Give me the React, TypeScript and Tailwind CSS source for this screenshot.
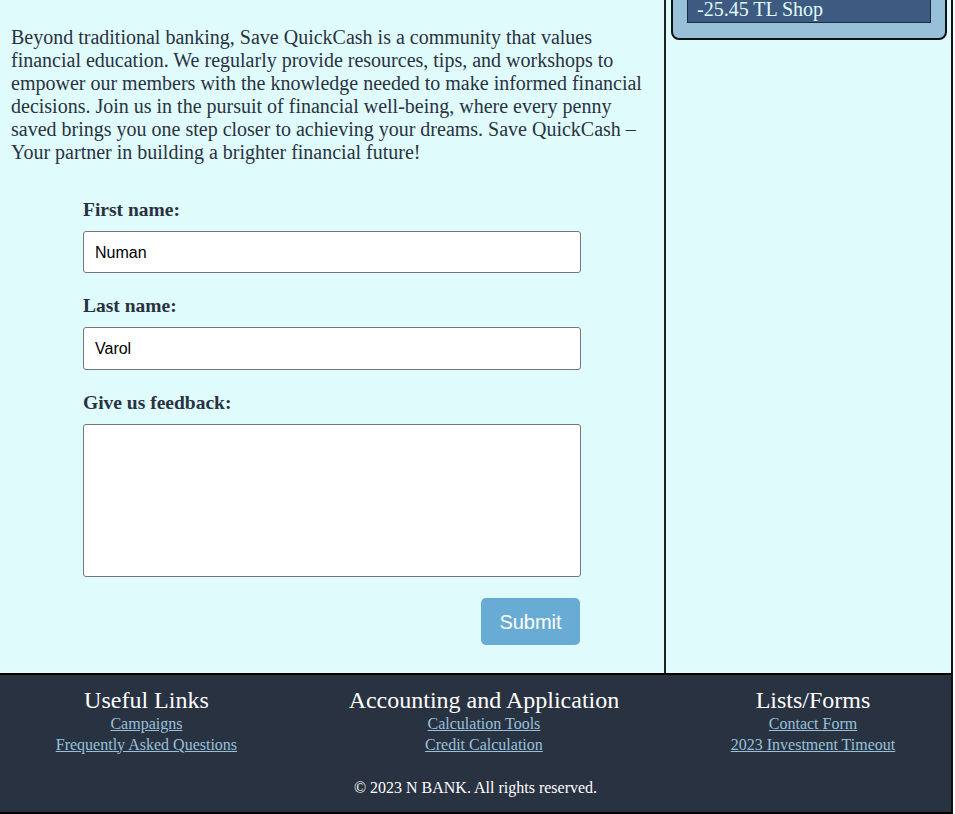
import React from 'react';

const serif = "font-['Liberation_Serif','Times_New_Roman',serif]";
const sans = "font-['Liberation_Sans',Arial,sans-serif]";

const footerCols = [
  { title: 'Useful Links', links: ['Campaigns', 'Frequently Asked Questions'] },
  { title: 'Accounting and Application', links: ['Calculation Tools', 'Credit Calculation'] },
  { title: 'Lists/Forms', links: ['Contact Form', '2023 Investment Timeout'] },
];

const FormField = ({ label, children }: { label: string; children: React.ReactNode }) => (
  <div className="flex flex-col">
    <label className="text-[19.5px] leading-[23px] font-bold text-[#293241] mb-[10px]">{label}</label>
    {children}
  </div>
);

const App: React.FC = () => {
  return (
    <div className={`${serif} w-[953px] h-[814px] overflow-hidden bg-[#e0fbfc] flex flex-col border-r-2 border-[#111]`}>
      <div className="flex h-[673px] shrink-0">
        <main className="w-[664px] pl-[11px] pr-[10px] pt-[26px]">
          <p className="text-[20px] leading-[23px] text-[#293241]">
            Beyond traditional banking, Save QuickCash is a community that values financial education. We
            regularly provide resources, tips, and workshops to empower our members with the knowledge needed to
            make informed financial decisions. Join us in the pursuit of financial well-being, where every penny
            saved brings you one step closer to achieving your dreams. Save QuickCash – Your partner in building a
            brighter financial future!
          </p>

          <form className="ml-[72px] w-[498px] mt-[34px] flex flex-col gap-[21px]" autoComplete="off">
            <FormField label="First name:">
              <input
                defaultValue="Numan"
                className={`${sans} h-[42px] bg-white border border-[#767676] rounded-[3px] px-[11px] pt-[2px] text-[16px] text-black outline-none`}
              />
            </FormField>
            <FormField label="Last name:">
              <input
                defaultValue="Varol"
                className={`${sans} h-[43px] bg-white border border-[#767676] rounded-[3px] px-[11px] text-[16px] text-black outline-none`}
              />
            </FormField>
            <FormField label="Give us feedback:">
              <textarea className="h-[153px] bg-white border border-[#767676] rounded-[3px] resize-none outline-none" />
            </FormField>
            <div className="flex justify-end">
              <button
                type="button"
                className={`${sans} w-[99px] h-[47px] mr-[1px] bg-[#68acd5] text-white text-[20px] rounded-[5px]`}
              >
                Submit
              </button>
            </div>
          </form>
        </main>

        <aside className="flex-1 border-l-2 border-[#222] pl-[5px] pr-[4px]">
          <div className="-mt-[20px] bg-[#98c1d9] border-2 border-[#111] rounded-b-[8px] px-[14px] pt-[14px] pb-[15px]">
            <div className="bg-[#3d5a80] border border-[#1f2b3d] px-[9px] pb-[1px] text-[20px] leading-[24px] text-[#e0fbfc]">
              -25.45 TL Shop
            </div>
          </div>
        </aside>
      </div>

      <footer className="flex-1 bg-[#293241] border-t-2 border-b-2 border-black text-white pt-[12px]">
        <div className="flex justify-around">
          {footerCols.map(col => (
            <div key={col.title} className="flex flex-col items-center">
              <h3 className="text-[24px] leading-[27px]">{col.title}</h3>
              {col.links.map(l => (
                <a key={l} href="#" className="text-[16px] leading-[20.5px] text-[#98c1d9] underline">
                  {l}
                </a>
              ))}
            </div>
          ))}
        </div>
        <p className="text-center text-[16px] leading-[20px] mt-[23px]">© 2023 N BANK. All rights reserved.</p>
      </footer>
    </div>
  );
};

export default App;
